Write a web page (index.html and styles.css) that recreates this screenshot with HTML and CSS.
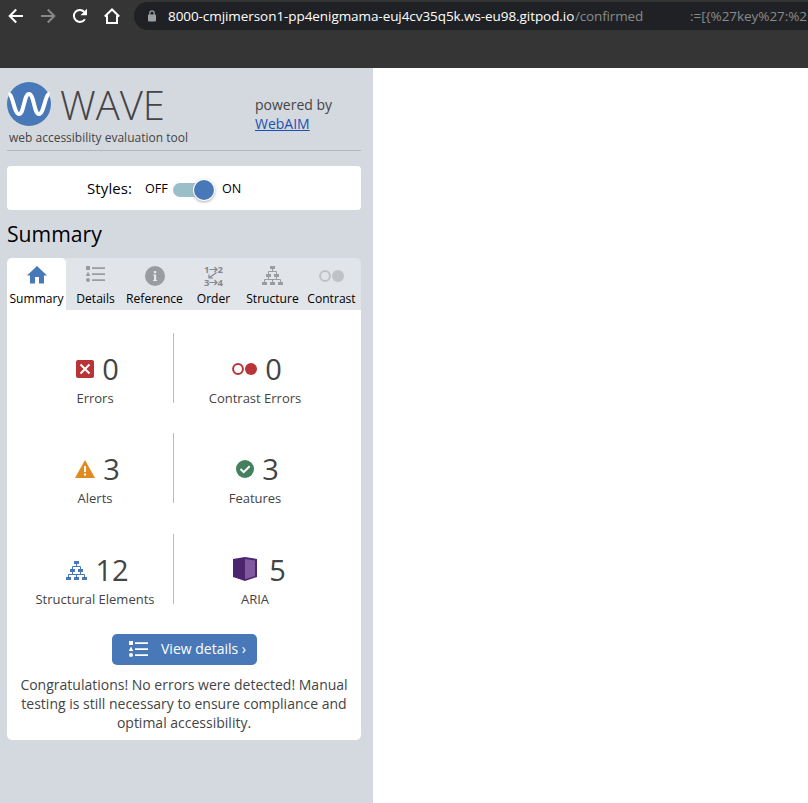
FILE: index.html
```html
<!DOCTYPE html>
<html lang="en">
<head>
<meta charset="utf-8">
<title>WAVE</title>
<link rel="stylesheet" href="styles.css">
</head>
<body>
<svg width="0" height="0" class="defs">
  <symbol id="list" viewBox="0 0 19 17"><path d="M0 0h4v4H0zM2 5.500l2.300 4.500H-.3z"/><circle cx="2" cy="14" r="2"/><path d="M6 1.200h13v1.800H6zM6 7.200h13v1.800H6zM6 13.200h13v1.800H6z"/></symbol>
  <symbol id="tree" viewBox="0 0 21 19"><path d="M8 0h5v3H8zM4 8h5v3H4zM12 8h5v3h-5zM0 16h5v3H0zM8 16h5v3H8zM16 16h5v3h-5z"/><path d="M10.500 3v2.500M6.500 8V5.500h8V8M6.500 11v2.500M14.500 11v2.500M2.500 16v-2.500h16V16M10.500 13.500V16" fill="none" stroke="currentColor"/></symbol>
  <symbol id="contrast" viewBox="0 0 25 12"><circle cx="6" cy="6" r="4.900" fill="none" stroke="currentColor" stroke-width="2"/><circle cx="19" cy="6" r="6"/></symbol>
</svg>
<header class="browser">
  <svg class="nav" viewBox="0 0 134 32" fill="none" stroke="#fff" stroke-width="2">
    <path d="M23 16H10M16.200 9.500L9.700 16l6.500 6.500"/>
    <path d="M41 16h13M47.800 9.500l6.500 6.500-6.500 6.500" stroke="#888"/>
    <path d="M84.900 19.200a6 6 0 1 1-.7-7.500"/><path d="M87 8.700v6.500h-6.500z" fill="#fff" stroke="none"/>
    <path d="M104.800 16.500l7.200-7 7.200 7M107 15.500V23h10v-7.500"/>
  </svg>
  <div class="address">
    <svg class="lock" viewBox="0 0 8 12"><path d="M1.800 5V3a2.200 2.200 0 0 1 4.400 0v2" fill="none" stroke="#9aa0a6" stroke-width="1.200"/><rect y="4.500" width="8" height="7" rx="1" fill="#9aa0a6"/></svg>
    <span class="host">8000-cmjimerson1-pp4enigmama-euj4cv35q5k.ws-eu98.gitpod.io</span><span class="path">/confirmed</span><span class="query">:=[{%27key%27:%2</span>
  </div>
</header>
<aside class="sidebar">
  <div class="brand">
    <div class="logo">
      <div class="mark">
        <svg width="44" height="44" viewBox="0 0 44 44"><circle cx="22" cy="22" r="22" fill="#4878b8"/><path d="M1.500 12C6 12 7 32 12 32S17 12 22 12s5 20 10 20 6-20 10.500-20" fill="none" stroke="#fff" stroke-width="4"/></svg>
        <span class="name">WAVE</span>
      </div>
      <div class="tagline">web accessibility evaluation tool</div>
    </div>
    <div class="powered">powered by<br><a href="#">WebAIM</a></div>
  </div>
  <div class="styles"><span class="styles-label">Styles:</span><span class="off">OFF</span><span class="switch"><i></i></span><span>ON</span></div>
  <h1>Summary</h1>
  <nav class="tabs">
    <div class="tab active"><span class="icon"><svg width="20" height="18" viewBox="0 0 20 18"><path d="M10 0l10 9.500h-3V17.500h-5V11H8v6.500H3v-8H0z"/></svg></span><span>Summary</span></div>
    <div class="tab"><span class="icon"><svg width="19" height="17"><use href="#list"/></svg></span><span>Details</span></div>
    <div class="tab"><span class="icon"><svg width="20" height="20" viewBox="0 0 20 20"><circle cx="10" cy="10" r="10"/><path d="M8.800 5h2.400v2.200H8.800zM8 8.500h3.200V14h1v1H8v-1h1v-4.500H8z" fill="#e4e7ec"/></svg></span><span>Reference</span></div>
    <div class="tab"><span class="icon"><svg class="order" width="20" height="22" viewBox="0 0 20 22"><text x="0" y="8">1</text><text x="13.500" y="8">2</text><text x="0" y="21">3</text><text x="13.500" y="21">4</text><path d="M5.500 4.500H13M10.500 2l2.500 2.500L10.500 7M5.500 17.500H13M10.500 15l2.500 2.500-2.500 2.500M12.500 7.500L5 13M5 9.500V13h4"/></svg></span><span>Order</span></div>
    <div class="tab"><span class="icon"><svg width="21" height="19"><use href="#tree"/></svg></span><span>Structure</span></div>
    <div class="tab pale"><span class="icon"><svg width="25" height="12"><use href="#contrast"/></svg></span><span>Contrast</span></div>
  </nav>
  <main class="panel">
    <div class="stats">
      <div class="stat"><div class="count"><svg width="18" height="18" viewBox="0 0 18 18"><rect width="18" height="18" rx="2" fill="#b83437"/><path d="M4.500 4.500l9 9M13.500 4.500l-9 9" stroke="#fff" stroke-width="2"/></svg><span>0</span></div><div class="label">Errors</div></div>
      <div class="stat"><div class="count red"><svg width="25" height="12"><use href="#contrast"/></svg><span>0</span></div><div class="label">Contrast Errors</div></div>
      <div class="stat"><div class="count"><svg width="20" height="18" viewBox="0 0 20 18"><path d="M10 0l10 18H0z" fill="#df8b21"/><path d="M9 6h2v6H9zM9 13.500h2v2H9z" fill="#fff"/></svg><span>3</span></div><div class="label">Alerts</div></div>
      <div class="stat"><div class="count"><svg width="18" height="18" viewBox="0 0 18 18"><circle cx="9" cy="9" r="9" fill="#43805c"/><path d="M4.500 9l3.200 3.200 6-6" fill="none" stroke="#fff" stroke-width="2"/></svg><span>3</span></div><div class="label">Features</div></div>
      <div class="stat"><div class="count blue"><svg width="21" height="19"><use href="#tree"/></svg><span>12</span></div><div class="label">Structural Elements</div></div>
      <div class="stat"><div class="count aria"><svg width="24" height="24" viewBox="0 0 24 24"><path d="M0 2l12-2 12 2v18l-12 4-12-4z" fill="#4b266f"/><path d="M12 2l10 1.500V19l-10 3.300z" fill="#80599f"/></svg><span>5</span></div><div class="label">ARIA</div></div>
    </div>
    <div class="button"><svg width="19" height="17"><use href="#list"/></svg><span>View details ›</span></div>
    <p>Congratulations! No errors were detected! Manual<br>testing is still necessary to ensure compliance and<br>optimal accessibility.</p>
  </main>
</aside>
</body>
</html>
```
FILE: styles.css
```css
* { box-sizing: border-box; }
body { margin: 0; height: 803px; overflow: hidden; background: #fff; font-family: "Open Sans", sans-serif; color: #000; }
svg { display: block; flex: none; overflow: visible; fill: currentColor; }
.defs { position: absolute; }
.browser { height: 68px; background: #353535; display: flex; align-items: flex-start; overflow: hidden; }
.nav { width: 134px; height: 32px; fill: none; }
.address { flex: none; width: 720px; height: 28px; margin-top: 2px; padding-left: 14px; border-radius: 14px; background: #202124; display: flex; align-items: center; font-size: 13.5px; color: #888b8f; white-space: nowrap; }
.lock { width: 8px; height: 12px; }
.host { width: 407px; margin-left: 12px; color: #fff; letter-spacing: -.07px; }
.path { width: 115px; letter-spacing: -.15px; }
.query { letter-spacing: -.05px; }
.sidebar { width: 373px; height: 735px; padding: 0 12px 0 7px; background: #d4d9e0; }
.brand { height: 83px; padding-top: 14px; border-bottom: 1px solid #afb5c1; display: flex; }
.logo { width: 248px; }
.mark { height: 44px; display: flex; align-items: center; gap: 9px; }
.name { padding-top: 2px; font-size: 40px; font-weight: 300; line-height: 40px; color: #444; }
.tagline { margin: 3px 0 0 2px; font-size: 12px; line-height: 18px; color: #444; white-space: nowrap; }
.powered { padding-top: 13px; font-size: 14px; line-height: 19px; color: #444; }
.powered a { color: #1d50b5; }
.styles { height: 44px; margin-top: 15px; padding: 1px 0 0 80px; border-radius: 4px; background: #fff; display: flex; align-items: center; font-size: 12.6px; }
.styles-label { width: 58px; margin-top: -2px; font-size: 15px; letter-spacing: .1px; }
.off { width: 28px; }
.switch { width: 41px; height: 14px; margin: 2px 8px 0 0; display: flex; align-items: center; }
.switch::before { content: ""; width: 34px; height: 14px; border-radius: 7px; background: #9bbfc9; }
.switch i { width: 20px; height: 20px; margin-left: -13px; border-radius: 50%; background: #4878b8; box-shadow: 0 0 0 1px #fff, 0 1px 3px 1px #aaa; }
h1 { margin: 9px 0 9px; font-size: 21.2px; font-weight: 400; line-height: 30px; }
.tabs { height: 52px; display: grid; grid-template-columns: repeat(6, 1fr); border-radius: 5px 5px 0 0; background: #e1e4e9; overflow: hidden; }
.tab { display: flex; flex-direction: column; align-items: center; font-size: 12.1px; line-height: 17px; white-space: nowrap; }
.icon { height: 32px; padding-top: 3px; display: flex; align-items: center; color: #999ca0; }
.active { background: #fff; border-top-right-radius: 5px; }
.active .icon { color: #4878b8; padding-top: 1px; }
.tab:nth-child(2) .icon { padding-top: 1px; }
.pale .icon { color: #bfc3c7; }
.order { font: 700 9.500px "Open Sans", sans-serif; color: #85888c; }
.order path { fill: none; stroke: currentColor; stroke-width: 1.2; }
.panel { height: 430px; padding-top: 23px; background: #fff; border-radius: 0 0 5px 5px; color: #444; }
.stats { margin-left: 10px; display: grid; grid-template-columns: 157px 162px; grid-template-rows: 100px 101px 70px; }
.stat { height: 70px; display: flex; flex-direction: column; align-items: center; padding-top: 16px; }
.stat:nth-child(odd) { border-right: 1px solid #bbb; }
.count { height: 40px; padding-left: 5px; display: flex; align-items: center; gap: 8px; font-size: 29px; line-height: 40px; }
.label { font-size: 13px; line-height: 18px; white-space: nowrap; }
.red { padding-left: 4px; color: #b83437; }
.blue { color: #4878b8; }
.count span { color: #444; }
.aria { gap: 12px; padding-left: 9px; }
.aria svg { margin-top: -2px; }
.button { width: 145px; height: 31px; margin: 30px 0 0 105px; padding-left: 17px; border-radius: 5px; background: #4878b8; color: #fff; display: flex; align-items: center; gap: 13px; font-size: 14px; white-space: nowrap; }
.button span { margin-top: -2px; }
p { margin: 10px 0 0; font-size: 14px; line-height: 19px; text-align: center; white-space: nowrap; }
```
